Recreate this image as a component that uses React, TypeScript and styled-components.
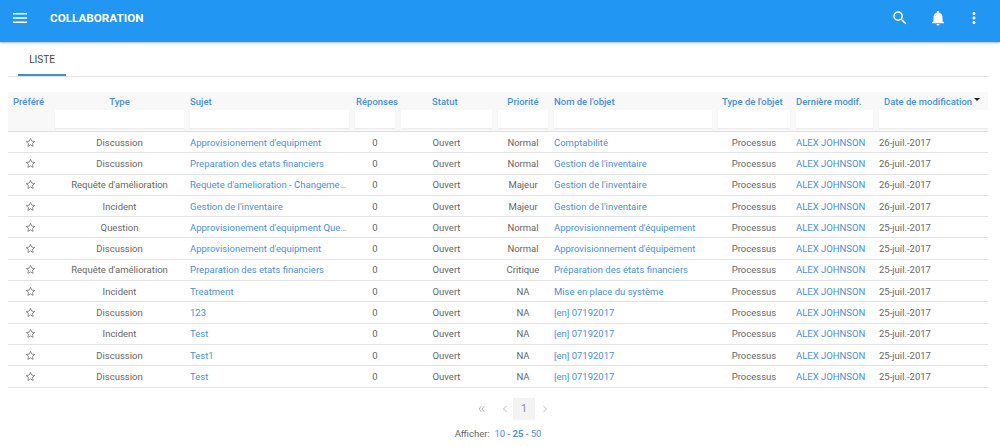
import React from "react";
import styled, { createGlobalStyle } from "styled-components";

const Global = createGlobalStyle`
  html, body { margin: 0; padding: 0; background: #fff; overflow: hidden; }
  body { font-family: Roboto, "Liberation Sans", sans-serif; }
`;
const Page = styled.div`width: 1000px; height: 447px; overflow: hidden; display: flex; flex-direction: column;`;
const TopBar = styled.header`
  flex: none; background: #2196f3; box-shadow: 0 1px 2px rgba(0,0,0,.3);
  display: flex; align-items: center; color: #fff; padding: 0 17px 6px 12px; height: 36px;
`;
const IconBtn = styled.span<{ $ml?: number }>`display: flex; margin-left: ${p => p.$ml ?? 0}px;`;
const Title = styled.h1`font-size: 11.7px; font-weight: 700; margin: 0 0 0 22px; flex: 1;`;
const Content = styled.main`padding: 0 12px 0 8px; display: flex; flex-direction: column;`;
const Tabs = styled.nav`height: 34px; border-bottom: 1px solid #e3e3e3; display: flex; padding-left: 10px;`;
const Tab = styled.div`
  width: 48px; height: 34px; box-sizing: border-box; border-bottom: 2px solid #3f8fcb; margin-bottom: -1px;
  font-size: 10px; color: #444; text-align: center; line-height: 35px;
`;
const Grid = styled.table`
  margin-top: 15px; width: 980px; border-collapse: collapse; table-layout: fixed; font-size: 9.5px;
`;
const HeadRow = styled.tr`background: #f8f8f8; height: 18px;`;
const FilterRow = styled.tr`background: #f8f8f8; height: 21px; border-bottom: 1px solid #ddd;`;
const Th = styled.th<{ $align?: string; $pl?: number }>`
  padding: 0 3px 0 ${p => p.$pl ?? 3}px; color: #4a90d2; font-weight: 500; font-size: 9.5px; white-space: nowrap; vertical-align: middle;
  text-align: ${p => p.$align ?? "left"}; position: relative;
`;
const FilterCell = styled.td`padding: 0 3px 3px; vertical-align: top; &:last-child { padding-right: 0; }`;
const FilterBox = styled.div`height: 18px; background: #fff; box-shadow: 0 1px 1px rgba(0,0,0,.05);`;
const Row = styled.tr`height: 21.3px; border-bottom: 1px solid #e2e2e2;`;
const Td = styled.td<{ $align?: string; $link?: boolean }>`
  padding: 0 3px; overflow: hidden; white-space: nowrap; text-overflow: ellipsis;
  color: ${p => (p.$link ? "#4a90d2" : "#666")}; text-align: ${p => p.$align ?? "left"};
`;
const Sort = styled.span`
  position: absolute; right: 8px; top: 6px; width: 0; height: 0;
  border-left: 3px solid transparent; border-right: 3px solid transparent; border-top: 3px solid #222;
`;
const Pager = styled.div`display: flex; justify-content: center; align-items: center; height: 22px; margin-top: 10px; padding-left: 32px;`;
const PageItem = styled.span<{ $width: number; $on?: boolean }>`
  width: ${p => p.$width}px; height: 22px; display: flex; align-items: center; justify-content: center;
  font-size: 10px; background: ${p => (p.$on ? "#f3f3f3" : "transparent")}; color: #888;
`;
const Sizes = styled.div`text-align: center; font-size: 9.5px; color: #666; margin-top: 8px;`;
const SizeLink = styled.span<{ $on?: boolean }>`color: #4a90d2; font-weight: ${p => (p.$on ? 700 : 400)};`;

const widths = [44, 135, 165, 46, 97, 56, 164, 78, 83, 112];
const heads: [string, string, number?][] = [
  ["Préféré", "left", 5], ["Type", "center"], ["Sujet", "left"], ["Réponses", "left", 4], ["Statut", "left", 34],
  ["Priorité", "center"], ["Nom de l'objet", "left"], ["Type de l'objet", "left", 7], ["Dernière modif.", "left"], ["Date de modification", "left", 8],
];
const A = "Approvisionement d'equipment";
const P = "Preparation des etats financiers";
const G = "Gestion de l'inventaire";
const Ae = "Approvisionnement d'équipement";
const E = "[en] 07192017";
const D = "Discussion", I = "Incident", R = "Requête d'amélioration";
const rows: string[][] = [
  [D, A, "Normal", "Comptabilité", "26"],
  [D, P, "Normal", G, "26"],
  [R, "Requete d'amelioration - Changement de processus", "Majeur", G, "26"],
  [I, G, "Majeur", G, "26"],
  ["Question", "Approvisionement d'equipment Question", "Normal", Ae, "25"],
  [D, A, "Normal", Ae, "25"],
  [R, P, "Critique", "Préparation des états financiers", "25"],
  [I, "Treatment", "NA", "Mise en place du système", "25"],
  [D, "123", "NA", E, "25"],
  [I, "Test", "NA", E, "25"],
  [D, "Test1", "NA", E, "25"],
  [D, "Test", "NA", E, "25"],
];
const Star = () => (
  <svg width="11" height="11" viewBox="0 0 24 24" fill="none" stroke="#777" strokeWidth="1.8" style={{ display: "block", margin: "0 auto" }}>
    <path d="M12 3l2.8 6 6.500.7-4.800 4.400 1.300 6.400L12 17.300 6.200 20.500l1.300-6.400L2.700 9.700l6.500-.7z" />
  </svg>
);
const Chevron = ({ d }: { d: string }) => (
  <svg width="10" height="10" viewBox="0 0 10 10" fill="none" stroke="#bbb" strokeWidth="1"><path d={d} /></svg>
);

export default function App() {
  return (
    <Page>
      <Global />
      <TopBar>
        <IconBtn>
          <svg width="16" height="16" viewBox="0 0 16 16" fill="#fff"><path d="M1 3h14v1.500H1zM1 7.300h14v1.500H1zM1 11.500h14V13H1z" /></svg>
        </IconBtn>
        <Title>COLLABORATION</Title>
        <IconBtn>
          <svg width="18" height="18" viewBox="0 0 24 24" fill="#fff"><path d="M15.500 14h-.79l-.28-.27A6.470 6.470 0 0 0 16 9.500 6.500 6.500 0 1 0 9.500 16c1.610 0 3.090-.59 4.230-1.570l.27.28v.79l5 4.990L20.490 19l-4.990-5zm-6 0C7.010 14 5 11.990 5 9.500S7.010 5 9.500 5 14 7.010 14 9.500 11.990 14 9.500 14z" /></svg>
        </IconBtn>
        <IconBtn $ml={20}>
          <svg width="18" height="18" viewBox="0 0 24 24" fill="#fff"><path d="M12 22c1.100 0 2-.9 2-2h-4c0 1.100.9 2 2 2zm6-6v-5c0-3.070-1.630-5.640-4.500-6.320V4c0-.83-.67-1.500-1.500-1.500s-1.500.67-1.500 1.500v.68C7.640 5.360 6 7.920 6 11v5l-2 2v1h16v-1l-2-2z" /></svg>
        </IconBtn>
        <IconBtn $ml={18}>
          <svg width="18" height="18" viewBox="0 0 24 24" fill="#fff"><path d="M12 8c1.100 0 2-.9 2-2s-.9-2-2-2-2 .9-2 2 .9 2 2 2zm0 2c-1.100 0-2 .9-2 2s.9 2 2 2 2-.9 2-2-.9-2-2-2zm0 6c-1.100 0-2 .9-2 2s.9 2 2 2 2-.9 2-2-.9-2-2-2z" /></svg>
        </IconBtn>
      </TopBar>
      <Content>
        <Tabs><Tab>LISTE</Tab></Tabs>
        <Grid>
          <colgroup>{widths.map((w, i) => <col key={i} style={{ width: w }} />)}</colgroup>
          <thead>
            <HeadRow>
              {heads.map(([h, a, pl], i) => (
                <Th key={h} $align={a} $pl={pl}>{h}{i === 9 && <Sort />}</Th>
              ))}
            </HeadRow>
            <FilterRow>
              {heads.map(([h], i) => <FilterCell key={h}>{i > 0 && <FilterBox />}</FilterCell>)}
            </FilterRow>
          </thead>
          <tbody>
            {rows.map((r, i) => (
              <Row key={i}>
                <Td><Star /></Td>
                <Td $align="center">{r[0]}</Td>
                <Td $link>{r[1]}</Td>
                <Td $align="center">0</Td>
                <Td $align="center">Ouvert</Td>
                <Td $align="center">{r[2]}</Td>
                <Td $link>{r[3]}</Td>
                <Td $align="center">Processus</Td>
                <Td $link>ALEX JOHNSON</Td>
                <Td>{r[4]}-juil.-2017</Td>
              </Row>
            ))}
          </tbody>
        </Grid>
        <Pager>
          <PageItem $width={17}><Chevron d="M4.500 2 2 5l2.500 3M7.500 2 5 5l2.500 3" /></PageItem>
          <PageItem $width={6} />
          <PageItem $width={17}><Chevron d="M6.500 2 3.500 5l3 3" /></PageItem>
          <PageItem $width={22} $on>1</PageItem>
          <PageItem $width={20}><Chevron d="M3.500 2l3 3-3 3" /></PageItem>
        </Pager>
        <Sizes>Afficher:&nbsp; <SizeLink>10</SizeLink> - <SizeLink $on>25</SizeLink> - <SizeLink>50</SizeLink></Sizes>
      </Content>
    </Page>
  );
}
